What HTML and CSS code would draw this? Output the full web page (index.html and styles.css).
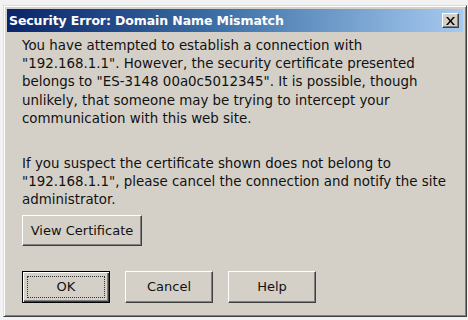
FILE: index.html
```html
<!DOCTYPE html>
<html>
<head>
<meta charset="utf-8">
<link rel="stylesheet" href="styles.css">
</head>
<body>
<div class="window">
  <div class="titlebar">
    <span class="title">Security Error: Domain Name Mismatch</span>
    <button class="close" aria-label="Close">
      <svg width="9" height="8" viewBox="0 0 9 8"><path d="M0 0h2l2.5 3 2.5-3h2L5.5 4 9 8H7L4.5 5 2 8H0l3.5-4z" fill="#000"/></svg>
    </button>
  </div>
  <div class="content">
    <p class="msg">You have attempted to establish a connection with "192.168.1.1". However, the security certificate presented belongs to "ES-3148 00a0c5012345". It is possible, though unlikely, that someone may be trying to intercept your communication with this web site.</p>
    <p class="msg second">If you suspect the certificate shown does not belong to "192.168.1.1", please cancel the connection and notify the site administrator.</p>
    <button class="btn view">View Certificate</button>
    <div class="actions">
      <button class="btn default"><span class="focus">OK</span></button>
      <button class="btn">Cancel</button>
      <button class="btn">Help</button>
    </div>
  </div>
</div>
</body>
</html>
```

FILE: styles.css
```css
html, body {
  margin: 0;
  padding: 0;
  background: #f2f2f2;
  width: 468px;
  height: 320px;
  overflow: hidden;
}
body {
  padding: 5px 0 0 3px;
  box-sizing: border-box;
  font-family: "DejaVu Sans", Tahoma, sans-serif;
}
.window {
  width: 464px;
  height: 312px;
  box-sizing: border-box;
  background: #d4d0c8;
  border: 1px solid;
  border-color: #e0ddd6 #404040 #404040 #e0ddd6;
  box-shadow: inset 1px 1px 0 #ffffff, inset -1px -1px 0 #808080;
  padding: 3px;
  display: flex;
  flex-direction: column;
}
.titlebar {
  height: 23px;
  background: linear-gradient(to right, #0a246a 0%, #3a6ea5 45%, #a6caf0 100%);
  display: flex;
  align-items: center;
  justify-content: space-between;
  padding: 0 4px 0 2px;
}
.title {
  color: #fff;
  font-weight: bold;
  font-size: 12.5px;
  letter-spacing: -0.1px;
}
.close {
  width: 17px;
  height: 15px;
  padding: 0;
  margin: 0;
  background: #d4d0c8;
  border: 1px solid;
  border-color: #fff #404040 #404040 #fff;
  box-shadow: inset -1px -1px 0 #808080;
  display: flex;
  align-items: center;
  justify-content: center;
}
.content {
  padding: 5px 2px 0 15px;
  font-size: 13.4px;
  color: #111;
  line-height: 18.2px;
}
.msg {
  margin: 0;
}
.msg.second {
  margin-top: 27px;
}
.btn {
  font-family: "DejaVu Sans", Tahoma, sans-serif;
  font-size: 13px;
  color: #111;
  background: #d4d0c8;
  border: 1px solid;
  border-color: #fff #404040 #404040 #fff;
  box-shadow: inset -1px -1px 0 #808080;
  padding: 0;
  margin: 0;
  height: 32px;
  width: 88px;
}
.view {
  display: block;
  width: 120px;
  height: 31px;
  margin-top: 5px;
}
.actions {
  display: flex;
  gap: 15px;
  margin-top: 25px;
}
.btn.default {
  border: 1px solid #000;
  box-shadow: inset 1px 1px 0 #fff, inset -1px -1px 0 #404040, inset -2px -2px 0 #808080;
  padding: 4px;
  display: flex;
}
.focus {
  flex: 1;
  border: 1px dotted #333;
  display: flex;
  align-items: center;
  justify-content: center;
}
```
